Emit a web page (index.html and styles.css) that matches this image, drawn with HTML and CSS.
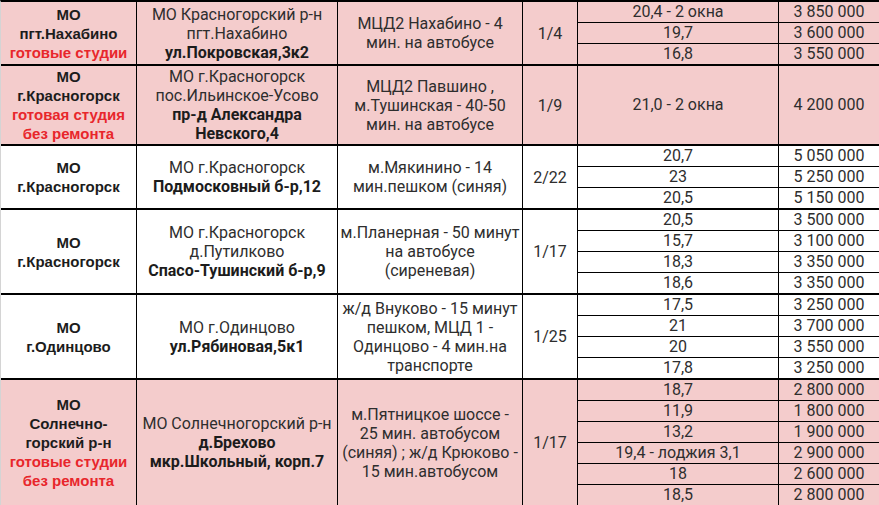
FILE: index.html
```html
<!DOCTYPE html>
<html lang="ru">
<head>
<meta charset="utf-8">
<title>Студии</title>
<link rel="stylesheet" href="styles.css">
</head>
<body>
<div class="sheet">
  <div class="block pink">
    <div class="cell c1"><div>МО<br>пгт.Нахабино<br><span class="red">готовые студии</span></div></div>
    <div class="cell c2"><div>МО Красногорский р-н<br>пгт.Нахабино<br><b>ул.Покровская,3к2</b></div></div>
    <div class="cell c3"><div>МЦД2 Нахабино - 4<br>мин. на автобусе</div></div>
    <div class="cell c4"><div>1/4</div></div>
    <div class="subs">
      <div class="sub"><div class="c5">20,4 - 2 окна</div><div class="c6">3 850 000</div></div>
      <div class="sub"><div class="c5">19,7</div><div class="c6">3 600 000</div></div>
      <div class="sub"><div class="c5">16,8</div><div class="c6">3 550 000</div></div>
    </div>
  </div>
  <div class="block pink">
    <div class="cell c1 tall"><div>МО<br>г.Красногорск<br><span class="red">готовая студия<br>без ремонта</span></div></div>
    <div class="cell c2"><div>МО г.Красногорск<br>пос.Ильинское-Усово<br><b>пр-д Александра<br>Невского,4</b></div></div>
    <div class="cell c3"><div>МЦД2 Павшино ,<br>м.Тушинская - 40-50<br>мин. на автобусе</div></div>
    <div class="cell c4"><div>1/9</div></div>
    <div class="subs">
      <div class="sub grow"><div class="c5">21,0 - 2 окна</div><div class="c6">4 200 000</div></div>
    </div>
  </div>
  <div class="block">
    <div class="cell c1"><div>МО<br>г.Красногорск</div></div>
    <div class="cell c2"><div>МО г.Красногорск<br><b>Подмосковный б-р,12</b></div></div>
    <div class="cell c3"><div>м.Мякинино - 14<br>мин.пешком (синяя)</div></div>
    <div class="cell c4"><div>2/22</div></div>
    <div class="subs">
      <div class="sub"><div class="c5">20,7</div><div class="c6">5 050 000</div></div>
      <div class="sub"><div class="c5">23</div><div class="c6">5 250 000</div></div>
      <div class="sub"><div class="c5">20,5</div><div class="c6">5 150 000</div></div>
    </div>
  </div>
  <div class="block">
    <div class="cell c1"><div>МО<br>г.Красногорск</div></div>
    <div class="cell c2"><div>МО г.Красногорск<br>д.Путилково<br><b>Спасо-Тушинский б-р,9</b></div></div>
    <div class="cell c3"><div>м.Планерная - 50 минут<br>на автобусе<br>(сиреневая)</div></div>
    <div class="cell c4"><div>1/17</div></div>
    <div class="subs">
      <div class="sub"><div class="c5">20,5</div><div class="c6">3 500 000</div></div>
      <div class="sub"><div class="c5">15,7</div><div class="c6">3 100 000</div></div>
      <div class="sub"><div class="c5">18,3</div><div class="c6">3 350 000</div></div>
      <div class="sub"><div class="c5">18,6</div><div class="c6">3 350 000</div></div>
    </div>
  </div>
  <div class="block">
    <div class="cell c1"><div>МО<br>г.Одинцово</div></div>
    <div class="cell c2"><div>МО г.Одинцово<br><b>ул.Рябиновая,5к1</b></div></div>
    <div class="cell c3"><div>ж/д Внуково - 15 минут<br>пешком, МЦД 1 -<br>Одинцово - 4 мин.на<br>транспорте</div></div>
    <div class="cell c4"><div>1/25</div></div>
    <div class="subs">
      <div class="sub"><div class="c5">17,5</div><div class="c6">3 250 000</div></div>
      <div class="sub"><div class="c5">21</div><div class="c6">3 700 000</div></div>
      <div class="sub"><div class="c5">20</div><div class="c6">3 550 000</div></div>
      <div class="sub"><div class="c5">17,8</div><div class="c6">3 250 000</div></div>
    </div>
  </div>
  <div class="block pink">
    <div class="cell c1"><div>МО<br>Солнечно-<br>горский р-н<br><span class="red">готовые студии<br>без ремонта</span></div></div>
    <div class="cell c2"><div>МО Солнечногорский р-н<br><b>д.Брехово<br>мкр.Школьный, корп.7</b></div></div>
    <div class="cell c3"><div>м.Пятницкое шоссе -<br>25 мин. автобусом<br>(синяя) ; ж/д Крюково -<br>15 мин.автобусом</div></div>
    <div class="cell c4"><div>1/17</div></div>
    <div class="subs">
      <div class="sub"><div class="c5">18,7</div><div class="c6">2 800 000</div></div>
      <div class="sub"><div class="c5">11,9</div><div class="c6">1 800 000</div></div>
      <div class="sub"><div class="c5">13,2</div><div class="c6">1 900 000</div></div>
      <div class="sub"><div class="c5">19,4 - лоджия 3,1</div><div class="c6">2 900 000</div></div>
      <div class="sub"><div class="c5">18</div><div class="c6">2 600 000</div></div>
      <div class="sub"><div class="c5">18,5</div><div class="c6">2 800 000</div></div>
    </div>
  </div>
</div>
</body>
</html>
```
FILE: styles.css
```css
html, body {
  margin: 0;
  padding: 0;
  background: #ffffff;
  overflow: hidden;
}

.sheet {
  width: 879px;
  box-sizing: border-box;
  border-top: 2px solid #000;
  border-left: 1px solid #d4d4d4;
  display: flex;
  flex-direction: column;
  font-family: Roboto, "Noto Sans", sans-serif;
  font-size: 16px;
  color: #2e2e2e;
}

.block {
  display: flex;
  border-bottom: 2px solid #000;
  background: #ffffff;
}

.block.pink {
  background: #f4cccc;
}

.cell {
  box-sizing: border-box;
  border-right: 1px solid #000;
  display: flex;
  align-items: center;
  justify-content: center;
  text-align: center;
  line-height: 19px;
  white-space: nowrap;
}

.c1 {
  width: 136px;
  font-family: "Liberation Sans", Arial, sans-serif;
  font-weight: 700;
  font-size: 15px;
  color: #1c1c1c;
}

.c1.tall {
  padding: 1px 0;
}

.c2 {
  width: 201px;
}

.c2 b {
  color: #1c1c1c;
  font-weight: 700;
}

.c3 {
  width: 185px;
}

.c4 {
  width: 55px;
}

.red {
  color: #e8262b;
}

.subs {
  display: flex;
  flex-direction: column;
  flex: 1;
}

.sub {
  display: flex;
  height: 20px;
  line-height: 20px;
  border-top: 1px solid #000;
}

.sub:first-child {
  border-top: none;
}

.sub.grow {
  flex: 1;
  height: auto;
}

.c5, .c6 {
  box-sizing: border-box;
  text-align: center;
  white-space: nowrap;
}

.c5 {
  width: 201px;
  border-right: 1px solid #000;
}

.c6 {
  flex: 1;
}

.sub.grow .c5,
.sub.grow .c6 {
  display: flex;
  align-items: center;
  justify-content: center;
}
```
